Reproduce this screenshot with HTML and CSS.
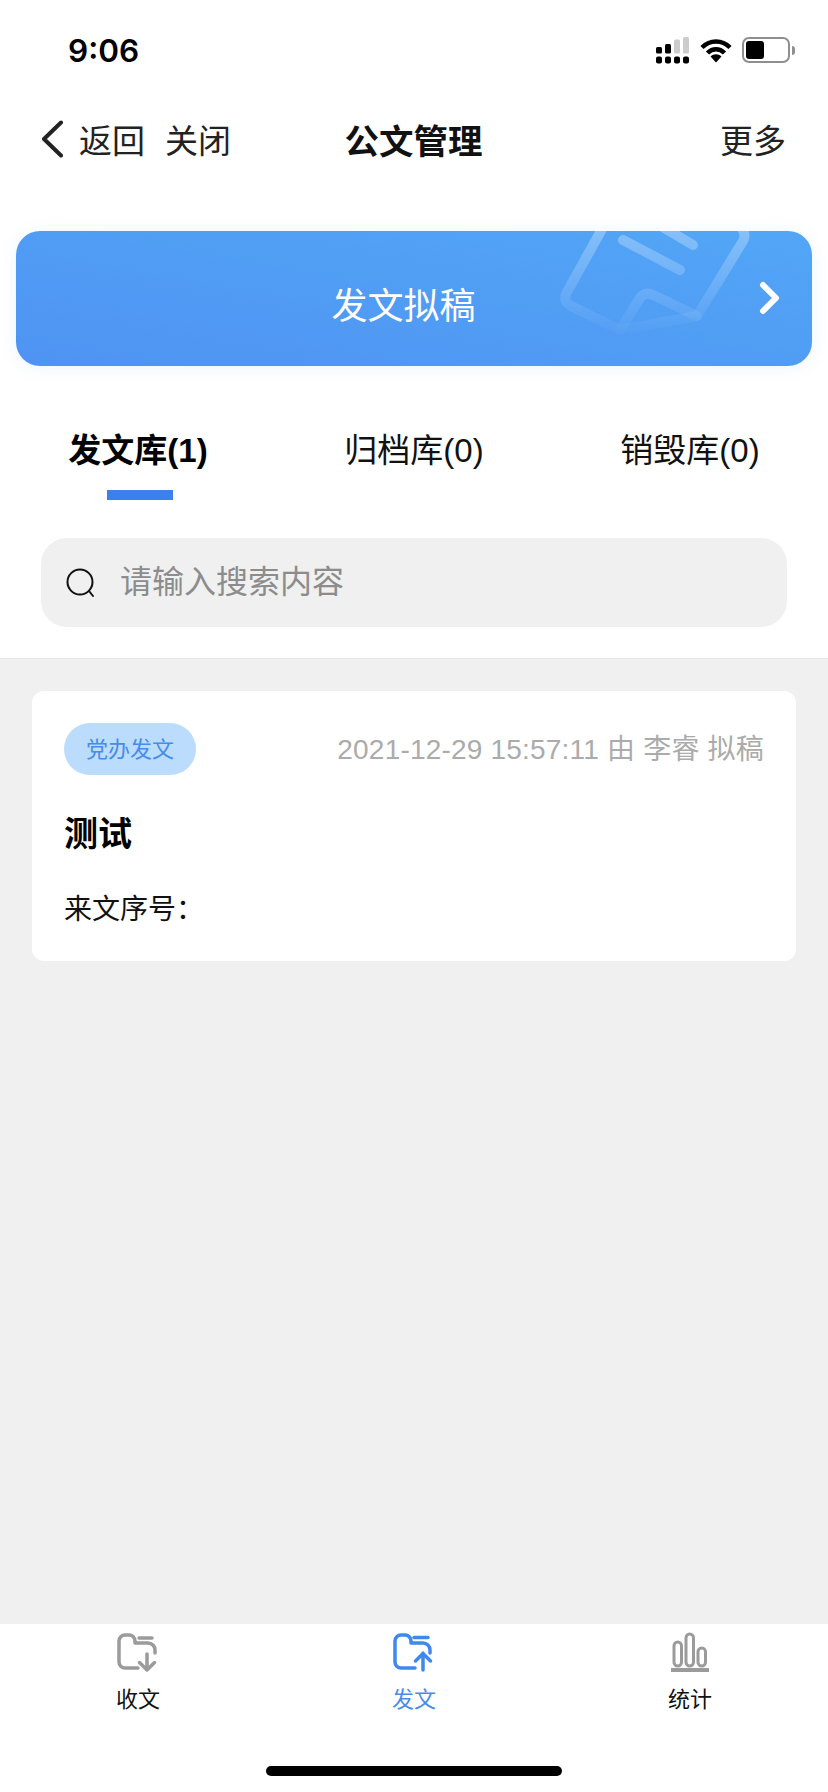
FILE: index.html
```html
<!DOCTYPE html>
<html lang="zh-CN">
<head>
<meta charset="utf-8">
<title>公文管理</title>
<link rel="stylesheet" href="styles.css">
</head>
<body>
<div class="page">
  <div class="status">
    <span class="time">9:06</span>
    <div class="status-icons">
      <svg class="signal" width="34" height="27" viewBox="0 0 34 27">
        <rect x="0" y="10" width="6" height="6.5" rx="1.5" fill="#000"/>
        <rect x="9" y="7" width="6" height="9.5" rx="1.5" fill="#000"/>
        <rect x="18" y="2.5" width="6" height="14" rx="1.5" fill="#ccc"/>
        <rect x="27" y="0" width="6" height="16.5" rx="1.5" fill="#ccc"/>
        <rect x="0" y="19.5" width="6" height="7" rx="2" fill="#000"/>
        <rect x="9" y="19.5" width="6" height="7" rx="2" fill="#000"/>
        <rect x="18" y="19.5" width="6" height="7" rx="2" fill="#000"/>
        <rect x="27" y="19.5" width="6" height="7" rx="2" fill="#000"/>
      </svg>
      <svg class="wifi" width="32" height="25" viewBox="0 0 32 25">
        <path d="M2 9.5C10 1.500 22 1.500 30 9.500" fill="none" stroke="#000" stroke-width="4.500"/>
        <path d="M7.500 15C12.500 10 19.500 10 24.500 15" fill="none" stroke="#000" stroke-width="4.500"/>
        <path d="M10.500 18.500C13.500 15.500 18.500 15.500 21.500 18.500L16 24.500Z" fill="#000"/>
      </svg>
      <div class="battery"><span class="battery-fill"></span></div>
      <span class="battery-cap"></span>
    </div>
  </div>

  <header class="nav">
    <div class="nav-left">
      <svg class="back" width="24" height="38" viewBox="0 0 24 38">
        <path d="M21 2.500L4 19L21 35.500" fill="none" stroke="#222" stroke-width="4" stroke-linecap="round" stroke-linejoin="round"/>
      </svg>
      <span class="nav-link">返回</span>
      <span class="nav-link">关闭</span>
    </div>
    <h1 class="nav-title">公文管理</h1>
    <span class="nav-link nav-more">更多</span>
  </header>

  <div class="banner">
    <svg class="banner-art" width="795" height="135" viewBox="0 0 795 135">
      <defs>
        <linearGradient id="fade" gradientUnits="userSpaceOnUse" x1="0" y1="0" x2="0" y2="108">
          <stop offset="0" stop-color="#fff" stop-opacity=".3"/>
          <stop offset="1" stop-color="#fff" stop-opacity="0"/>
        </linearGradient>
      </defs>
      <g fill="none" stroke="url(#fade)" stroke-width="10" stroke-linecap="round" stroke-linejoin="round">
        <path d="M577 -30L724 -5Q731 3 727 10L681 85L604 99L555 75Q546 70 551 61L596 -20"/>
        <path d="M607 9L664 39"/>
        <path d="M640 -8L677 14"/>
        <path d="M604 99L624 67Q629 60 637 64L681 85"/>
      </g>
    </svg>
    <span class="banner-text">发文拟稿</span>
    <svg class="banner-chevron" width="22" height="34" viewBox="0 0 22 34">
      <path d="M4 4L17 17L4 30" fill="none" stroke="#fff" stroke-width="6" stroke-linecap="round" stroke-linejoin="round"/>
    </svg>
  </div>

  <nav class="tabs">
    <div class="tab tab-active">发文库(1)</div>
    <div class="tab">归档库(0)</div>
    <div class="tab">销毁库(0)</div>
  </nav>

  <div class="search-wrap">
    <div class="search">
      <svg width="32" height="32" viewBox="0 0 32 32">
        <circle cx="15" cy="15" r="12.500" fill="none" stroke="#111" stroke-width="2"/>
        <path d="M24 24L28 29" fill="none" stroke="#111" stroke-width="2" stroke-linecap="round"/>
      </svg>
      <span class="search-text">请输入搜索内容</span>
    </div>
  </div>

  <main class="content">
    <article class="card">
      <div class="card-head">
        <span class="tag">党办发文</span>
        <span class="meta">2021-12-29 15:57:11 由 李睿 拟稿</span>
      </div>
      <h2 class="card-title">测试</h2>
      <p class="card-line">来文序号：</p>
    </article>
  </main>

  <footer class="tabbar">
    <div class="tabbar-item">
      <svg width="42" height="40" viewBox="0 0 42 40">
        <g fill="none" stroke="#9b9b9b" stroke-width="3.500" stroke-linecap="round" stroke-linejoin="round">
          <path d="M21 36H8a6 6 0 0 1-6-6V9a6 6 0 0 1 6-6h4a6 6 0 0 1 6 6v2h13a7 7 0 0 1 7 7v3"/>
          <path d="M22 6H35"/>
          <path d="M30 22V38M22.500 30.500L30 38L37.500 30.500"/>
        </g>
      </svg>
      <span class="tabbar-label">收文</span>
    </div>
    <div class="tabbar-item tabbar-active">
      <svg width="42" height="40" viewBox="0 0 42 40">
        <g fill="none" stroke="#3f88ee" stroke-width="3.500" stroke-linecap="round" stroke-linejoin="round">
          <path d="M22 36H8a6 6 0 0 1-6-6V9a6 6 0 0 1 6-6h4a6 6 0 0 1 6 6v2h12a7 7 0 0 1 7 7v3"/>
          <path d="M21 5.500H35"/>
          <path d="M30 21V38M22.500 29L30 21.500L37.500 29"/>
        </g>
      </svg>
      <span class="tabbar-label">发文</span>
    </div>
    <div class="tabbar-item">
      <svg width="42" height="40" viewBox="0 0 42 40">
        <g fill="none" stroke="#9b9b9b" stroke-width="3">
          <rect x="5" y="10" width="7.500" height="24" rx="3.750"/>
          <rect x="17" y="2" width="7.500" height="32" rx="3.750"/>
          <rect x="29" y="16" width="7.500" height="18" rx="3.750"/>
        </g>
        <path d="M2 38H40" fill="none" stroke="#9b9b9b" stroke-width="4"/>
      </svg>
      <span class="tabbar-label">统计</span>
    </div>
    <span class="home-indicator"></span>
  </footer>
</div>
</body>
</html>
```

FILE: styles.css
```css
* { box-sizing: border-box; }

html, body {
  margin: 0;
  padding: 0;
  background: #fff;
}

body {
  font-family: "Liberation Sans", "Noto Sans CJK SC", sans-serif;
  color: #000;
}

.page {
  width: 828px;
  height: 1792px;
  display: flex;
  flex-direction: column;
  overflow: hidden;
}

.status {
  height: 90px;
  flex: none;
  padding: 10px 33px 0 68px;
  display: flex;
  align-items: center;
  justify-content: space-between;
}

.time {
  font-family: Inter, "Liberation Sans", sans-serif;
  font-size: 31.500px;
  font-weight: 600;
  color: #000;
}

.status-icons {
  display: flex;
  align-items: center;
}

.signal { margin-right: 10px; }
.wifi { margin-right: 10px; }

.battery {
  width: 48px;
  height: 26px;
  border: 2px solid #8f8f8f;
  border-radius: 7px;
  padding: 2px;
}

.battery-fill {
  display: block;
  width: 18px;
  height: 18px;
  background: #000;
  border-radius: 3px;
}

.battery-cap {
  width: 3px;
  height: 9px;
  margin-left: 2px;
  background: #8f8f8f;
  border-radius: 0 3px 3px 0;
}

.nav {
  height: 100px;
  flex: none;
  padding: 0 42px 2px 40px;
  display: grid;
  grid-template-columns: 1fr auto 1fr;
  align-items: center;
}

.nav-left {
  display: flex;
  align-items: center;
}

.back { margin-right: 15px; }

.nav-link {
  font-size: 33px;
  color: #222;
  margin-right: 20px;
}

.nav-title {
  margin: 0 0 0 1px;
  font-size: 34.500px;
  font-weight: 700;
  color: #111;
}

.nav-more {
  justify-self: end;
  margin-right: 0;
}

.banner {
  position: relative;
  flex: none;
  height: 135px;
  margin: 41px 16px 0;
  border-radius: 24px;
  background: linear-gradient(190deg, #52a6f7 0%, #4f93f2 100%);
  box-shadow: 0 2px 16px rgba(80, 140, 230, .1);
  display: flex;
  align-items: center;
  justify-content: center;
  overflow: hidden;
}

.banner-art {
  position: absolute;
  left: 0;
  top: 0;
}

.banner-text {
  position: relative;
  font-size: 36px;
  color: #fff;
  margin-right: 21px;
  margin-top: 9px;
}

.banner-chevron {
  position: absolute;
  right: 31px;
  top: 50px;
}

.tabs {
  flex: none;
  height: 134px;
  display: grid;
  grid-template-columns: repeat(3, 1fr);
  padding-top: 57px;
}

.tab {
  position: relative;
  text-align: center;
  font-size: 33px;
  line-height: 56px;
  color: #111;
}

.tab-active {
  font-weight: 700;
  color: #000;
}

.tab-active::after {
  content: "";
  position: absolute;
  left: 107px;
  top: 67px;
  width: 66px;
  height: 10px;
  background: #3b7ff0;
}

.search-wrap {
  flex: none;
  height: 158px;
  padding: 38px 41px 0;
}

.search {
  height: 89px;
  border-radius: 26px;
  background: #f0f0f0;
  display: flex;
  align-items: center;
  padding: 0 0 0 24px;
}

.search-text {
  margin-left: 23px;
  margin-bottom: 7px;
  font-size: 32px;
  color: #8c8c8c;
}

.content {
  flex: 1;
  min-height: 0;
  background: #f0f0f0;
  border-top: 1px solid #e6e6e6;
  padding: 32px 32px 0;
}

.card {
  height: 270px;
  background: #fff;
  border-radius: 12px;
  padding: 32px 32px 0;
}

.card-head {
  display: flex;
  justify-content: space-between;
  align-items: center;
}

.tag {
  width: 132px;
  height: 52px;
  border-radius: 26px;
  background: #bbdcfd;
  color: #458ceb;
  font-size: 22px;
  line-height: 54px;
  text-align: center;
}

.meta {
  font-size: 28px;
  letter-spacing: .2px;
  color: #ababab;
  margin-bottom: 4px;
}

.card-title {
  margin: 34px 0 0;
  font-size: 34px;
  line-height: 50px;
  font-weight: 700;
  color: #000;
}

.card-line {
  margin: 30px 0 0;
  font-size: 28px;
  line-height: 42px;
  color: #111;
}

.tabbar {
  position: relative;
  flex: none;
  height: 168px;
  background: #fff;
  display: grid;
  grid-template-columns: repeat(3, 1fr);
  align-items: start;
  padding-top: 8px;
}

.tabbar-item {
  display: flex;
  flex-direction: column;
  align-items: center;
  color: #111;
}

.tabbar-active { color: #458ceb; }

.tabbar-label {
  margin-top: 12px;
  font-size: 22px;
  line-height: 32px;
}

.home-indicator {
  position: absolute;
  left: 266px;
  top: 142px;
  width: 296px;
  height: 10px;
  border-radius: 5px;
  background: #000;
}
```
